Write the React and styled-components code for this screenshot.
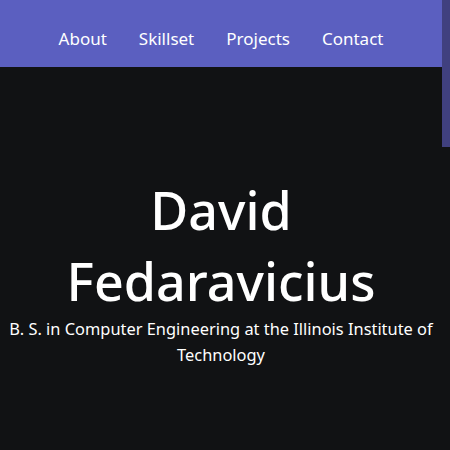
import { createGlobalStyle, styled } from "styled-components"

const GlobalStyle = createGlobalStyle`
    html, body {
        margin: 0;
        padding: 0;
        background: #111214;
    }
    body {
        font-family: "Noto Sans", sans-serif;
        color: #ffffff;
    }
`

const Page = styled.div`
    min-height: 1380px;
    margin-right: 8px;
    display: flex;
    flex-direction: column;
`

const ScrollThumb = styled.div`
    position: fixed;
    top: 0;
    right: 0;
    width: 8px;
    height: 147px;
    background: #40407f;
`

const NavBar = styled.nav`
    box-sizing: border-box;
    height: 67px;
    padding-top: 9px;
    background: #5b5fc0;
    display: flex;
    align-items: center;
    justify-content: center;
    gap: 32px;
`

const NavLink = styled.a`
    color: #ffffff;
    font-size: 17px;
    text-decoration: none;
    cursor: pointer;
`

const Hero = styled.header`
    padding: 107px 4px 0;
    text-align: center;
`

const Name = styled.h1`
    margin: 0;
    font-size: 52px;
    font-weight: 500;
    line-height: 71px;
`

const Degree = styled.p`
    margin: 0;
    font-size: 16.4px;
    line-height: 26px;
`

const links = ["About", "Skillset", "Projects", "Contact"]

const App = () => {
    return (
        <Page>
            <GlobalStyle />
            <ScrollThumb />
            <NavBar>
                {links.map(link => <NavLink key={link}>{link}</NavLink>)}
            </NavBar>
            <Hero>
                <Name>David Fedaravicius</Name>
                <Degree>B. S. in Computer Engineering at the Illinois Institute of Technology</Degree>
            </Hero>
        </Page>
    )
}

export default App
